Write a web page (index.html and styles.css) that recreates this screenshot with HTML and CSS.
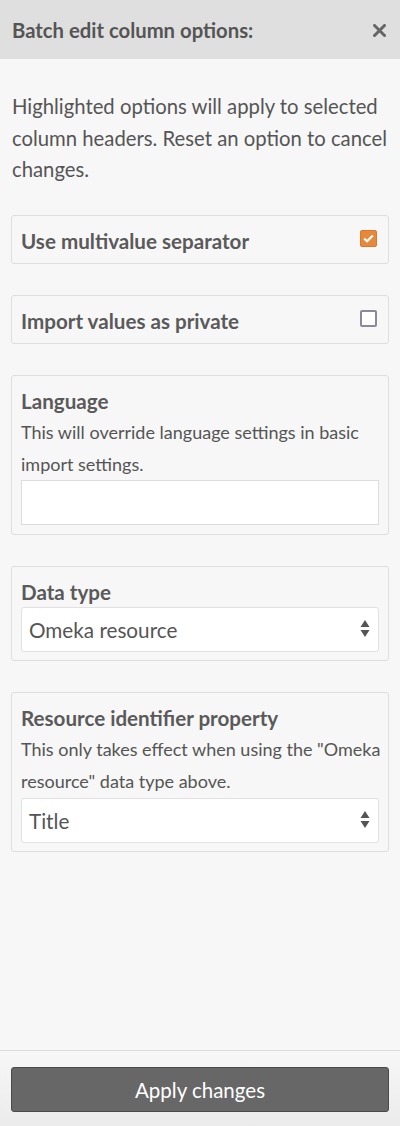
FILE: index.html
```html
<!DOCTYPE html>
<html>
<head>
<meta charset="utf-8">
<link rel="stylesheet" href="styles.css">
</head>
<body>
<div class="sidebar">
  <div class="header">
    <h3 class="title">Batch edit column options:</h3>
    <span class="close">
      <svg width="13" height="13" viewBox="0 0 13 13"><path d="M1.5 1.5 L11.5 11.5 M11.5 1.5 L1.5 11.5" stroke="#666" stroke-width="3" stroke-linecap="square"/></svg>
    </span>
  </div>
  <div class="content">
    <p class="intro">Highlighted options will apply to selected column headers. Reset an option to cancel changes.</p>
    <div class="field row">
      <span class="label">Use multivalue separator</span>
      <span class="check checked">
        <svg width="11" height="9" viewBox="0 0 11 9"><path d="M1.2 4.6 L4.1 7.3 L9.8 1.4" fill="none" stroke="#fff" stroke-width="2.2"/></svg>
      </span>
    </div>
    <div class="field row">
      <span class="label">Import values as private</span>
      <span class="check"></span>
    </div>
    <div class="field">
      <div class="label">Language</div>
      <div class="desc">This will override language settings in basic import settings.</div>
      <div class="input"></div>
    </div>
    <div class="field">
      <div class="label">Data type</div>
      <div class="select"><span>Omeka resource</span>
        <svg class="arrows" width="10" height="20" viewBox="0 0 10 20"><path d="M5 1 L9.5 8 L0.5 8 Z M0.5 11 L9.5 11 L5 18 Z" fill="#555"/></svg>
      </div>
    </div>
    <div class="field">
      <div class="label">Resource identifier property</div>
      <div class="desc">This only takes effect when using the "Omeka resource" data type above.</div>
      <div class="select"><span>Title</span>
        <svg class="arrows" width="10" height="20" viewBox="0 0 10 20"><path d="M5 1 L9.5 8 L0.5 8 Z M0.5 11 L9.5 11 L5 18 Z" fill="#555"/></svg>
      </div>
    </div>
  </div>
  <div class="footer">
    <button class="apply">Apply changes</button>
  </div>
</div>
</body>
</html>
```

FILE: styles.css
```css
html, body {
  margin: 0;
  padding: 0;
}
body {
  font-family: Lato, "Open Sans", sans-serif;
  color: #555;
  background: #f7f7f7;
}
.sidebar {
  display: flex;
  flex-direction: column;
  height: 100vh;
  width: 400px;
}
.header {
  height: 59px;
  background: #dfdfdf;
  display: flex;
  align-items: center;
  justify-content: space-between;
  padding: 0 14px 0 12px;
  box-sizing: border-box;
  flex-shrink: 0;
}
.title {
  margin: 0;
  font-size: 20.3px;
  font-weight: 700;
  color: #555;
  line-height: 24px;
  padding-top: 1px;
}
.close {
  display: flex;
  padding-top: 2px;
}
.content {
  flex: 1;
  padding: 32px 11px 0 11px;
}
.intro {
  margin: 0 -4px 29px 1px;
  font-size: 20.3px;
  line-height: 31.5px;
}
.field {
  border: 1px solid #dedede;
  border-radius: 3px;
  padding: 11px 9px 8px 9px;
  margin-bottom: 31px;
}
.field.row {
  display: flex;
  align-items: center;
  justify-content: space-between;
  padding: 11px 11px 8px 9px;
}
.label {
  font-size: 20.6px;
  font-weight: 700;
  line-height: 28px;
  color: #5a5a5a;
}
.desc {
  font-size: 18px;
  line-height: 32px;
  color: #555;
  padding-top: 1px;
  margin-right: -8px;
}
.check {
  width: 17px;
  height: 17px;
  box-sizing: border-box;
  border: 2px solid #8c8a98;
  border-radius: 2px;
  background: #fff;
  display: flex;
  align-items: center;
  justify-content: center;
  margin-top: -4px;
}
.check.checked {
  background: #e8883a;
  border: 1px solid #d87a2e;
}
.input {
  height: 45px;
  box-sizing: border-box;
  border: 1px solid #dcdcdc;
  background: #fff;
  margin-top: 0;
  margin-bottom: 1px;
}
.select {
  height: 45px;
  box-sizing: border-box;
  border: 1px solid #e2e2e2;
  border-radius: 3px;
  background: #fff;
  display: flex;
  align-items: center;
  justify-content: space-between;
  padding: 0 8px 0 7px;
  font-size: 20.7px;
  color: #555;
  margin-top: 1px;
}
.select span {
  padding-top: 1px;
}
.arrows {
  display: block;
}
.footer {
  flex-shrink: 0;
  border-top: 1px solid #dcdcdc;
  background: linear-gradient(#f7f7f7, #ebebeb);
  padding: 16px 11px 14px 11px;
}
.apply {
  display: block;
  width: 100%;
  height: 45px;
  background: #676767;
  border: 1px solid #4a4a4a;
  border-radius: 3px;
  color: #fff;
  font-family: Lato, "Open Sans", sans-serif;
  font-size: 20.5px;
  padding: 0;
}
```
